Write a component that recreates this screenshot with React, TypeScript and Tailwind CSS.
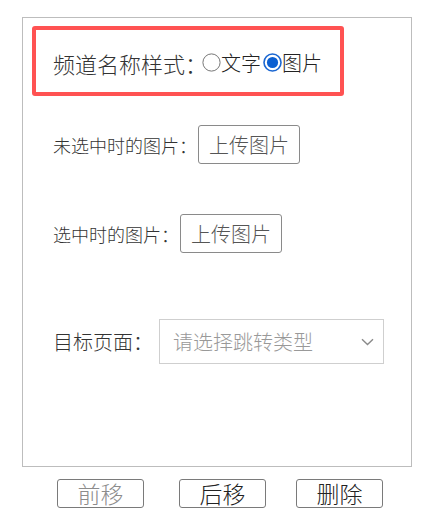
import React from "react";

const font = { fontFamily: '"Noto Sans CJK SC", "Noto Sans", sans-serif' };

function Radio({ checked }: { checked?: boolean }) {
  return (
    <svg width="19" height="19" viewBox="0 0 19 19" className="shrink-0">
      {checked ? (
        <>
          <circle cx="9.5" cy="9.5" r="8.5" fill="#fff" stroke="#1a66d1" strokeWidth="1.6" />
          <circle cx="9.5" cy="9.5" r="5.6" fill="#0b5fd1" />
        </>
      ) : (
        <circle cx="9.5" cy="9.5" r="8.6" fill="#fff" stroke="#767676" strokeWidth="1" />
      )}
    </svg>
  );
}

function UploadButton() {
  return (
    <button
      type="button"
      className="h-[39px] w-[102px] rounded-[3px] border border-[#8a8a8a] bg-white text-[20px] font-light leading-none text-[#555]"
    >
      上传图片
    </button>
  );
}

function ActionButton({ label, disabled }: { label: string; disabled?: boolean }) {
  return (
    <button
      type="button"
      disabled={disabled}
      className={
        "h-[29px] w-[87px] rounded-[3px] border border-[#7a7a7a] bg-white text-[23px] font-light leading-none " +
        (disabled ? "text-[#8c8c8c]" : "text-[#222]")
      }
    >
      {label}
    </button>
  );
}

export default function App() {
  return (
    <div className="min-h-[531px] bg-white pl-[22px] pt-[17px] font-light" style={font}>
      <div className="h-[450px] w-[390px] border border-[#bdbdbd] pt-[8px] pl-[9px]">
        <div className="flex h-[70px] w-[312px] items-center rounded-[3px] border-4 border-[#ff5252] pl-[17px] pt-[3px]">
          <span className="text-[22px] leading-none text-[#333]">频道名称样式：</span>
          <span className="-ml-[5px] flex items-center text-[20px] leading-none text-[#222]">
            <Radio />
            <span>文字</span>
            <span className="ml-[2px]"><Radio checked /></span>
            <span>图片</span>
          </span>
        </div>

        <div className="ml-[21px] mt-[29px] flex items-center">
          <span className="text-[18px] leading-none text-[#333]">未选中时的图片：</span>
          <span className="ml-[1px]"><UploadButton /></span>
        </div>

        <div className="ml-[21px] mt-[50px] flex items-center">
          <span className="text-[18px] leading-none text-[#333]">选中时的图片：</span>
          <span className="ml-[1px]"><UploadButton /></span>
        </div>

        <div className="ml-[21px] mt-[66px] flex items-center">
          <span className="text-[20px] leading-none text-[#333]">目标页面：</span>
          <div className="ml-[6px] flex h-[45px] w-[225px] items-center justify-between border border-[#cfcfcf] bg-white pl-[13px] pr-[9px]">
            <span className="text-[20px] leading-none text-[#999]">请选择跳转类型</span>
            <svg width="13" height="8" viewBox="0 0 13 8">
              <path d="M1 1.2 L6.5 6.5 L12 1.2" fill="none" stroke="#8a8a8a" strokeWidth="1.4" />
            </svg>
          </div>
        </div>
      </div>

      <div className="mt-[12px] flex">
        <span className="ml-[35px]"><ActionButton label="前移" disabled /></span>
        <span className="ml-[35px]"><ActionButton label="后移" /></span>
        <span className="ml-[30px]"><ActionButton label="删除" /></span>
      </div>
    </div>
  );
}
